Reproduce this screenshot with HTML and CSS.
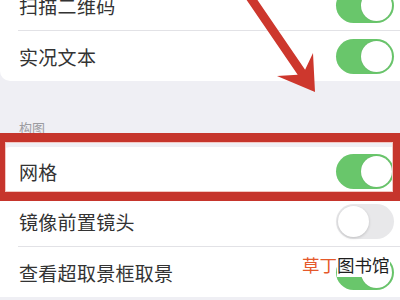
FILE: index.html
```html
<!DOCTYPE html>
<html lang="zh-CN">
<head>
    <meta charset="UTF-8">
    <meta name="viewport" content="width=device-width, initial-scale=1.0">
    <title>相机设置</title>
    <link rel="stylesheet" href="styles.css">
</head>
<body>
    <div class="screen">
        <div class="card card-top">
            <div class="row">
                <span class="label">扫描二维码</span>
                <span class="switch on"><span class="knob"></span></span>
            </div>
            <div class="row">
                <span class="label">实况文本</span>
                <span class="switch on"><span class="knob"></span></span>
            </div>
        </div>

        <div class="section-title">构图</div>

        <div class="card card-bottom">
            <div class="row">
                <span class="label">网格</span>
                <span class="switch on"><span class="knob"></span></span>
            </div>
            <div class="row">
                <span class="label">镜像前置镜头</span>
                <span class="switch"><span class="knob"></span></span>
            </div>
            <div class="row">
                <span class="label">查看超取景框取景</span>
                <span class="switch on"><span class="knob"></span></span>
            </div>
        </div>

        <!-- annotation on top of the screenshot -->
        <svg class="arrow" width="400" height="300" viewBox="0 0 400 300">
            <polygon points="248.9,-12.5 305.1,69.7 313,53 315,92 277,76 297.7,74.7 241.5,-7.5" fill="#cd372d"/>
        </svg>
        <div class="highlight"></div>

        <div class="watermark"><span class="wm-red">草丁</span><span class="wm-dark">图书馆</span></div>
    </div>
</body>
</html>
```

FILE: styles.css
```css
body {
    margin: 0;
    padding: 0;
    background: #efeff4;
    font-family: "Noto Sans CJK SC", "Noto Sans", sans-serif;
    color: #333;
    width: 400px;
    height: 300px;
    overflow: hidden;
}

.screen {
    position: relative;
    width: 400px;
    height: 300px;
    overflow: hidden;
}

.card {
    background: #fff;
    margin-right: -12px;
}

.card-top {
    margin-top: -19px;
    border-radius: 0 0 10px 10px;
}

.card-bottom {
    border-radius: 10px 10px 0 0;
}

.row {
    height: 50px;
    margin-left: 18px;
    padding-right: 18px;
    display: flex;
    align-items: center;
    justify-content: space-between;
    box-sizing: border-box;
    border-bottom: 1px solid #e2e2e6;
}

.row:last-child {
    border-bottom: none;
}

.label {
    font-size: 19px;
    padding-left: 1px;
    letter-spacing: 0.3px;
}

.section-title {
    font-size: 13px;
    line-height: 18px;
    color: #9c9ca1;
    padding: 38px 0 10px 19px;
}

.switch {
    position: relative;
    width: 58px;
    height: 35px;
    border-radius: 18px;
    background: #e8e8ea;
    flex-shrink: 0;
}

.switch.on {
    background: #69c66b;
}

.knob {
    position: absolute;
    top: 2px;
    left: 2px;
    width: 31px;
    height: 31px;
    border-radius: 50%;
    background: #fff;
    box-shadow: 0 1px 3px rgba(0, 0, 0, 0.18);
}

.switch.on .knob {
    left: auto;
    right: 2px;
    box-shadow: 0 0 1px rgba(0, 0, 0, 0.2);
}

.arrow {
    position: absolute;
    top: 0;
    left: 0;
    pointer-events: none;
}

.highlight {
    position: absolute;
    left: -4px;
    right: -2px;
    top: 133px;
    height: 68px;
    border: 9px solid #c6352c;
    box-sizing: border-box;
    box-shadow: inset 0 0 0 1px #f2c7c2;
    pointer-events: none;
}

.watermark {
    position: absolute;
    left: 302px;
    top: 254px;
    font-size: 17.5px;
    line-height: 22px;
}

.wm-red {
    color: #e5592a;
}

.wm-dark {
    color: #1e1e1e;
    background: #fff;
}
```
